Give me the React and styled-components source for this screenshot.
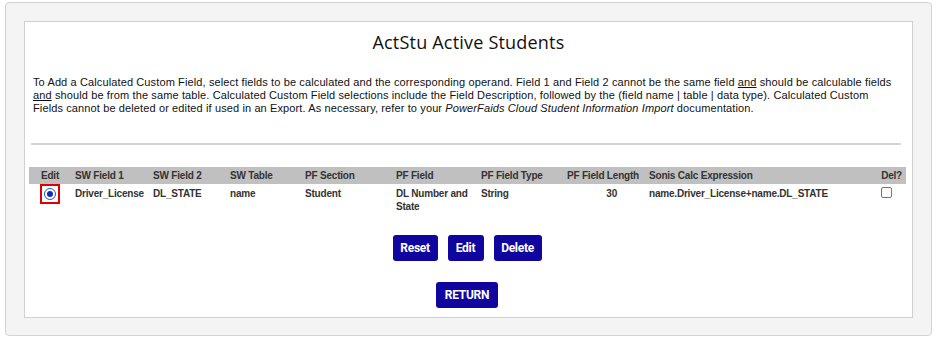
import React from "react";
import styled, { createGlobalStyle } from "styled-components";

const Global = createGlobalStyle`
  html, body { margin: 0; padding: 0; background: #ffffff; }
  body { font-family: "Liberation Sans", Arial, sans-serif; }
`;

const Outer = styled.div`
  margin: 2px 4px 0 5px;
  height: 334px;
  box-sizing: border-box;
  background: #f4f4f4;
  border: 1px solid #d3d3d3;
  border-radius: 4px;
  padding: 18px 18px 0 18px;
`;

const Inner = styled.div`
  background: #ffffff;
  border: 1px solid #d0d0d0;
  height: 297px;
  box-sizing: border-box;
  padding: 7px 4px 0 4px;
  display: flex;
  flex-direction: column;
`;

const Title = styled.h1`
  margin: 0;
  text-align: center;
  font-family: "Open Sans", "Segoe UI", sans-serif;
  font-weight: 400;
  font-size: 18px;
  letter-spacing: 0.2px;
  line-height: 26px;
  color: #111;
`;

const Intro = styled.p`
  margin: 21px 13px 0 4px;
  font-size: 11px;
  letter-spacing: 0.12px;
  line-height: 13px;
  color: #111;
`;

const Rule = styled.hr`
  margin: 28px 7px 0 2px;
  border: 0;
  border-top: 2px solid #d4d4d4;
  height: 0;
`;

const Table = styled.table`
  margin: 22px 7px 0 0;
  border-collapse: collapse;
  table-layout: fixed;
  width: 877px;
  font-family: "Liberation Sans", Arial, sans-serif;
  font-size: 10px;
  letter-spacing: -0.2px;
  font-weight: 700;
  color: #333;
`;

const Th = styled.th`
  background: #c0c0c0;
  height: 17px;
  padding: 0 4px;
  text-align: ${(p) => p.$align || "left"};
  font-weight: 700;
  color: #333;
  white-space: nowrap;
`;

const Td = styled.td`
  vertical-align: top;
  padding: ${(p) => (p.$pt != null ? p.$pt : 3)}px ${(p) => (p.$pr != null ? p.$pr : 4)}px 3px 4px;
  line-height: 13px;
  text-align: ${(p) => p.$align || "left"};
`;

const RadioBox = styled.span`
  display: inline-flex;
  align-items: center;
  justify-content: center;
  width: 20px;
  height: 20px;
  box-sizing: border-box;
  border: 2px solid #e00000;
  vertical-align: top;
`;

const Radio = styled.span`
  width: 12px;
  height: 12px;
  border-radius: 50%;
  border: 1px solid #1a5fd0;
  box-sizing: border-box;
  display: flex;
  align-items: center;
  justify-content: center;
  background: #fff;
  &::after {
    content: "";
    width: 6px;
    height: 6px;
    border-radius: 50%;
    background: #0a2fb0;
  }
`;

const Check = styled.span`
  display: inline-block;
  width: 11px;
  height: 11px;
  box-sizing: border-box;
  border: 1px solid #767676;
  border-radius: 2px;
  background: #fff;
  margin: 0 2px 0 0;
`;

const ButtonRow = styled.div`
  display: flex;
  justify-content: center;
  gap: ${(p) => p.$gap || 10}px;
  margin-top: ${(p) => p.$mt}px;
  padding-right: 3px;
`;

const Button = styled.button`
  height: 26px;
  min-width: ${(p) => p.$w}px;
  padding: 0 6px;
  background: #10069f;
  color: #fff;
  border: 0;
  border-radius: 3px;
  font-family: Roboto, "Liberation Sans", Arial, sans-serif;
  font-weight: 700;
  font-size: 12px;
  letter-spacing: -0.3px;
`;

const cols = [42, 78, 77, 75, 91, 85, 86, 82, 215, 46];

export default function App() {
  return (
    <>
      <Global />
      <Outer>
        <Inner>
          <Title>ActStu Active Students</Title>
          <Intro>
            To Add a Calculated Custom Field, select fields to be calculated and the corresponding operand. Field 1 and
            Field 2 cannot be the same field <u>and</u> should be calculable fields <u>and</u> should be from the same
            table. Calculated Custom Field selections include the Field Description, followed by the (field name | table
            | data type). Calculated Custom Fields cannot be deleted or edited if used in an Export. As necessary, refer
            to your <i>PowerFaids Cloud Student Information Import</i> documentation.
          </Intro>
          <Rule />
          <Table>
            <colgroup>
              {cols.map((w, i) => (
                <col key={i} style={{ width: w }} />
              ))}
            </colgroup>
            <thead>
              <tr>
                <Th $align="center">Edit</Th>
                <Th>SW Field 1</Th>
                <Th>SW Field 2</Th>
                <Th>SW Table</Th>
                <Th>PF Section</Th>
                <Th>PF Field</Th>
                <Th>PF Field Type</Th>
                <Th>PF Field Length</Th>
                <Th>Sonis Calc Expression</Th>
                <Th $align="right">Del?</Th>
              </tr>
            </thead>
            <tbody>
              <tr>
                <Td $align="center" $pt={0}>
                  <RadioBox>
                    <Radio />
                  </RadioBox>
                </Td>
                <Td>Driver_License</Td>
                <Td>DL_STATE</Td>
                <Td>name</Td>
                <Td>Student</Td>
                <Td>DL Number and State</Td>
                <Td>String</Td>
                <Td $align="right" $pr={28}>30</Td>
                <Td>name.Driver_License+name.DL_STATE</Td>
                <Td $align="right" $pr={12}>
                  <Check />
                </Td>
              </tr>
            </tbody>
          </Table>
          <ButtonRow $mt={19}>
            <Button $w={45}>Reset</Button>
            <Button $w={36}>Edit</Button>
            <Button $w={48}>Delete</Button>
          </ButtonRow>
          <ButtonRow $mt={21}>
            <Button $w={62}>RETURN</Button>
          </ButtonRow>
        </Inner>
      </Outer>
    </>
  );
}
